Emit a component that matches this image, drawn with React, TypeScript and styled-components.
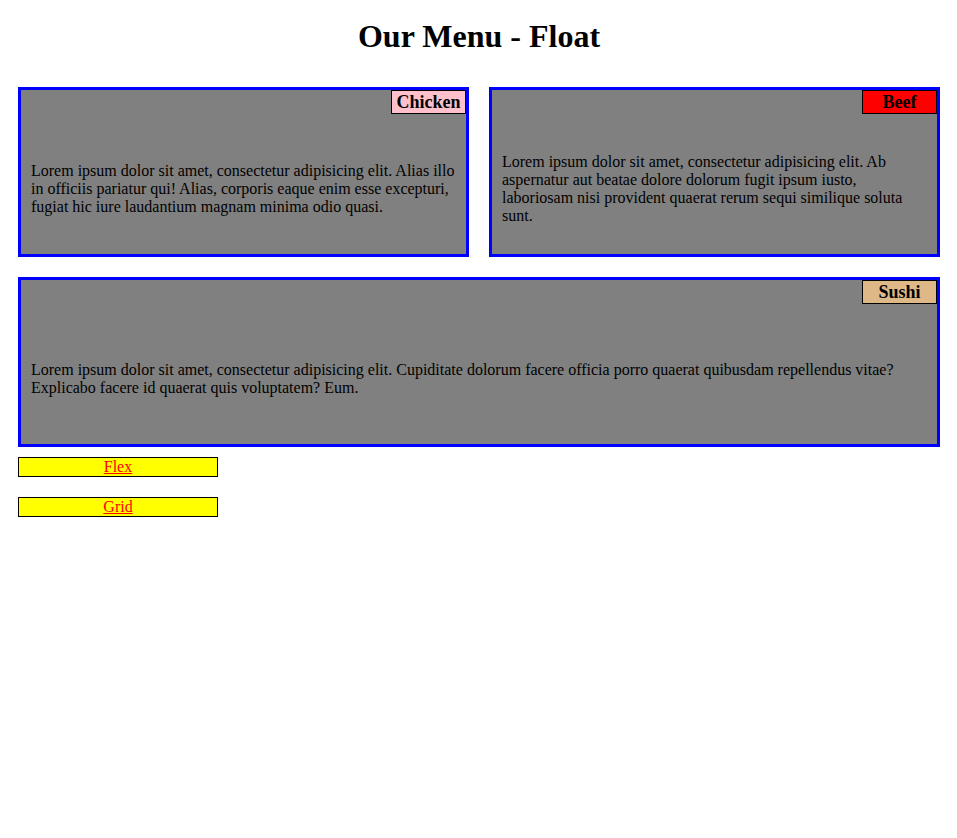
import React from "react";
import styled, { createGlobalStyle } from "styled-components";

const Global = createGlobalStyle`
  html, body { margin: 0; padding: 0; background: #fff; }
  body { font-family: "Liberation Serif", "Times New Roman", serif; font-size: 16px; color: #000; }
`;

const Page = styled.div`
  padding: 0 17px 0 18px;
`;

const Title = styled.h1`
  margin: 0;
  padding: 18px 0 32px;
  text-align: center;
  font-size: 32px;
  font-weight: bold;
  line-height: 37px;
`;

const Menu = styled.div`
  display: flex;
  flex-direction: column;
  gap: 20px;
`;

const Row = styled.div`
  display: flex;
  gap: 20px;
`;

const Card = styled.section`
  flex: 1;
  height: 170px;
  box-sizing: border-box;
  border: 3px solid #0000ff;
  background: #808080;
  display: flex;
  flex-direction: column;
`;

const Label = styled.h3<{ $bg: string }>`
  align-self: flex-end;
  margin: 0;
  width: 75px;
  height: 24px;
  box-sizing: border-box;
  border: 1px solid #000;
  background: ${(p) => p.$bg};
  font-size: 18px;
  font-weight: bold;
  line-height: 23px;
  text-align: center;
  white-space: nowrap;
`;

const Body = styled.div`
  flex: 1;
  display: flex;
  align-items: center;
  padding: 10px 10px 0;
`;

const Text = styled.p`
  margin: 0;
  line-height: 18px;
`;

const Links = styled.nav`
  display: flex;
  flex-direction: column;
  gap: 20px;
  padding-top: 10px;
`;

const LinkBox = styled.div`
  width: 200px;
  height: 20px;
  box-sizing: border-box;
  border: 1px solid #000;
  background: #ffff00;
  text-align: center;
  line-height: 18px;
`;

const Link = styled.a`
  color: #ff0000;
  text-decoration: underline;
`;

const items = {
  chicken: "Lorem ipsum dolor sit amet, consectetur adipisicing elit. Alias illo in officiis pariatur qui! Alias, corporis eaque enim esse excepturi, fugiat hic iure laudantium magnam minima odio quasi.",
  beef: "Lorem ipsum dolor sit amet, consectetur adipisicing elit. Ab aspernatur aut beatae dolore dolorum fugit ipsum iusto, laboriosam nisi provident quaerat rerum sequi similique soluta sunt.",
  sushi: "Lorem ipsum dolor sit amet, consectetur adipisicing elit. Cupiditate dolorum facere officia porro quaerat quibusdam repellendus vitae? Explicabo facere id quaerat quis voluptatem? Eum.",
};

function MenuCard({ name, bg, text }: { name: string; bg: string; text: string }) {
  return (
    <Card>
      <Label $bg={bg}>{name}</Label>
      <Body>
        <Text>{text}</Text>
      </Body>
    </Card>
  );
}

export default function App() {
  return (
    <>
      <Global />
      <Page>
        <Title>Our Menu - Float</Title>
        <Menu>
          <Row>
            <MenuCard name="Chicken" bg="#ffc0cb" text={items.chicken} />
            <MenuCard name="Beef" bg="#ff0000" text={items.beef} />
          </Row>
          <Row>
            <MenuCard name="Sushi" bg="#deb887" text={items.sushi} />
          </Row>
        </Menu>
        <Links>
          <LinkBox><Link href="#flex">Flex</Link></LinkBox>
          <LinkBox><Link href="#grid">Grid</Link></LinkBox>
        </Links>
      </Page>
    </>
  );
}
